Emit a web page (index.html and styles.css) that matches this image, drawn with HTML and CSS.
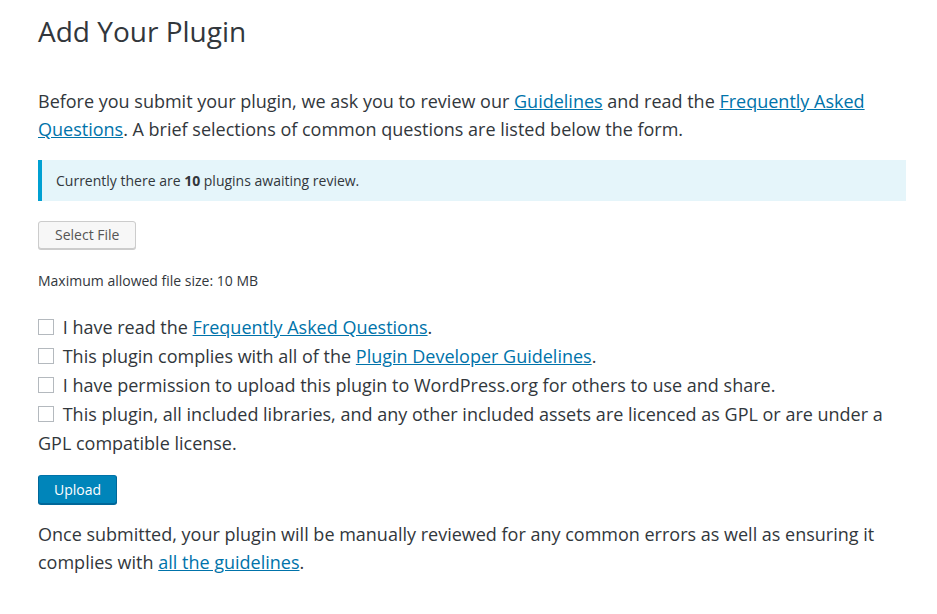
FILE: index.html
```html
<!DOCTYPE html>
<html lang="en">
<head>
<meta charset="UTF-8">
<title>Add Your Plugin</title>
<link rel="stylesheet" href="styles.css">
</head>
<body>
  <div class="container">
    <h1>Add Your Plugin</h1>

    <p class="intro">Before you submit your plugin, we ask you to review our <a href="#">Guidelines</a> and read the <a href="#">Frequently Asked Questions</a>. A brief selections of common questions are listed below the form.</p>

    <div class="notice">
      <p>Currently there are <strong>10</strong> plugins awaiting review.</p>
    </div>

    <form id="uploadForm">
      <button type="button" class="button">Select File</button>
      <p class="filesize">Maximum allowed file size: 10 MB</p>

      <ul class="checks">
        <li><label><input type="checkbox"> I have read the <a href="#">Frequently Asked Questions</a>.</label></li>
        <li><label><input type="checkbox"> This plugin complies with all of the <a href="#">Plugin Developer Guidelines</a>.</label></li>
        <li><label><input type="checkbox"> I have permission to upload this plugin to WordPress.org for others to use and share.</label></li>
        <li><label><input type="checkbox"> This plugin, all included libraries, and any other included assets are licenced as GPL or are under a GPL compatible license.</label></li>
      </ul>

      <button type="submit" class="button button-primary">Upload</button>
    </form>

    <p class="outro">Once submitted, your plugin will be manually reviewed for any common errors as well as ensuring it complies with <a href="#">all the guidelines</a>.</p>
  </div>
</body>
</html>
```

FILE: styles.css
```css
body {
  font-family: "Open Sans", Arial, sans-serif;
  margin: 0;
  padding: 0;
  background-color: #fff;
  color: #32373c;
}

.container {
  width: 868px;
  margin: 0 0 0 38px;
  padding-top: 11px;
}

h1 {
  font-size: 28px;
  font-weight: 400;
  line-height: 40px;
  margin: 0 0 36px;
  color: #32373c;
}

a {
  color: #0073aa;
}

.intro,
.outro {
  font-size: 18px;
  line-height: 28px;
  margin: 0 0 17px;
}

.notice {
  background-color: #e5f5fa;
  border-left: 4px solid #00a0d2;
  padding: 11px 14px;
  margin-bottom: 20px;
}

.notice p {
  margin: 0;
  font-size: 14px;
  line-height: 19px;
}

.button {
  font-family: inherit;
  font-size: 14px;
  line-height: 26px;
  height: 28px;
  padding: 0 16px;
  color: #555;
  background: #f7f7f7;
  border: 1px solid #ccc;
  border-radius: 3px;
  box-shadow: 0 1px 0 #ccc;
  cursor: pointer;
}

.filesize {
  font-size: 14px;
  margin: 22px 0 22px;
  line-height: 20px;
}

.checks {
  list-style: none;
  margin: 0 0 17px;
  padding: 0;
}

.checks li {
  font-size: 18px;
  line-height: 29px;
}

.checks input {
  appearance: none;
  width: 16px;
  height: 16px;
  margin: 0 4px 0 0;
  border: 1px solid #b4b9be;
  background: #fff;
  vertical-align: -1px;
}

.button-primary {
  background: #0085ba;
  border-color: #0073aa #006799 #006799;
  box-shadow: 0 1px 0 #006799;
  color: #fff;
  height: 29px;
  padding: 0 15px;
  margin-bottom: 16px;
}
```
